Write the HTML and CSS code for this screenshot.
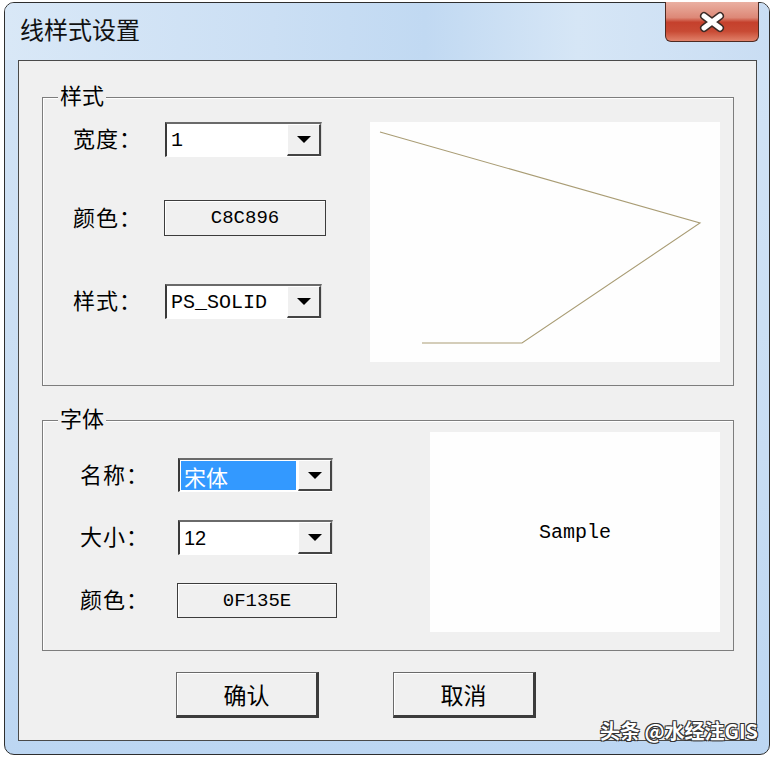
FILE: index.html
```html
<!DOCTYPE html>
<html>
<head>
    <meta charset="UTF-8">
    <title>线样式设置</title>
    <link rel="stylesheet" href="styles.css">
</head>
<body>
    <div class="window">
        <div class="titlebar">
            <div class="title">线样式设置</div>
            <button class="close-btn">
                <svg width="30" height="22" viewBox="0 0 30 22">
                    <path d="M7 5 L23 17 M23 5 L7 17" stroke="#3b2a26" stroke-width="8" stroke-linecap="round"/>
                    <path d="M7 5 L23 17 M23 5 L7 17" stroke="#ffffff" stroke-width="5" stroke-linecap="round"/>
                </svg>
            </button>
        </div>

        <div class="client">
            <div class="group group-line">
                <span class="group-title">样式</span>
                <div class="fields">
                    <div class="row row-width">
                        <span class="label">宽度：</span>
                        <div class="combo">
                            <span class="combo-text mono">1</span>
                            <span class="drop"><span class="arrow"></span></span>
                        </div>
                    </div>
                    <div class="row row-color">
                        <span class="label">颜色：</span>
                        <div class="color-box mono">C8C896</div>
                    </div>
                    <div class="row row-style">
                        <span class="label">样式：</span>
                        <div class="combo">
                            <span class="combo-text mono">PS_SOLID</span>
                            <span class="drop"><span class="arrow"></span></span>
                        </div>
                    </div>
                </div>
                <div class="preview line-preview">
                    <svg width="350" height="240" viewBox="0 0 350 240">
                        <polyline points="10,10 330,101 152,221 52,221" fill="none" stroke="#a99c74" stroke-width="1.1"/>
                    </svg>
                </div>
            </div>

            <div class="group group-font">
                <span class="group-title">字体</span>
                <div class="fields">
                    <div class="row row-name">
                        <span class="label">名称：</span>
                        <div class="combo">
                            <span class="combo-text selected">宋体</span>
                            <span class="drop"><span class="arrow"></span></span>
                        </div>
                    </div>
                    <div class="row row-size">
                        <span class="label">大小：</span>
                        <div class="combo">
                            <span class="combo-text sans">12</span>
                            <span class="drop"><span class="arrow"></span></span>
                        </div>
                    </div>
                    <div class="row row-fcolor">
                        <span class="label">颜色：</span>
                        <div class="color-box mono">0F135E</div>
                    </div>
                </div>
                <div class="preview font-preview">
                    <span class="mono sample">Sample</span>
                </div>
            </div>

            <div class="buttons">
                <button class="push">确认</button>
                <button class="push">取消</button>
            </div>
        </div>

        <div class="watermark">头条 @水经注GIS</div>
    </div>
</body>
</html>
```

FILE: styles.css
```css
body {
    margin: 0;
    background: #ffffff;
    font-family: "Noto Sans CJK SC", "Noto Sans", sans-serif;
}
.window {
    position: relative;
    margin: 2px 0 0 4px;
    width: 764px;
    height: 751px;
    border: 1px solid #2e2e2e;
    border-radius: 10px;
    background: linear-gradient(to bottom, #d3e4f6 0%, #c8ddf3 60%, #bcd6f2 100%);
    display: flex;
    flex-direction: column;
}
.titlebar {
    flex-shrink: 0;
    height: 57px;
    display: flex;
    align-items: flex-start;
    justify-content: space-between;
    background: linear-gradient(to right, #d9e8f7 0%, #cbdff4 35%, #c1d9f2 55%, #d6e6f6 75%, #c9ddf3 100%);
    border-radius: 9px 9px 0 0;
}
.title {
    padding: 11px 0 0 15px;
    font-size: 24px;
    line-height: 30px;
    color: #111;
}
.close-btn {
    margin: -1px 10px 0 0;
    width: 94px;
    height: 40px;
    border: 1px solid #4e2a22;
    border-top: none;
    border-radius: 0 0 6px 6px;
    background: linear-gradient(to bottom, #eab0a2 0%, #dd8877 40%, #c5402c 52%, #c84a34 75%, #e1826a 100%);
    display: flex;
    align-items: center;
    justify-content: center;
    padding: 0;
}
.client {
    flex-shrink: 0;
    box-sizing: border-box;
    margin: 0 12px 13px 13px;
    height: 681px;
    border: 1px solid #4a4a4a;
    background: #f0f0f0;
    padding: 36px 22px 0 23px;
}
.group {
    position: relative;
    border: 1px solid #7d7d7d;
    box-shadow: inset 1px 1px 0 #ffffff;
    display: flex;
    justify-content: space-between;
}
.group-title {
    position: absolute;
    top: -19px;
    left: 15px;
    padding: 0 2px;
    background: #f0f0f0;
    font-size: 22px;
    line-height: 30px;
    color: #000;
}
.group-line {
    height: 287px;
}
.group-font {
    margin-top: 34px;
    height: 229px;
}
.fields {
    display: flex;
    flex-direction: column;
}
.row {
    display: flex;
    align-items: center;
}
.label {
    padding-bottom: 5px;
    font-size: 22px;
    line-height: 26px;
    letter-spacing: 1px;
    color: #000;
}
.group-line .fields {
    padding: 24px 0 0 30px;
}
.group-line .label {
    width: 92px;
}
.group-line .combo {
    width: 157px;
    height: 35px;
}
.row-color {
    margin-top: 43px;
}
.row-color .color-box {
    margin-left: -1px;
    width: 162px;
    height: 36px;
}
.row-style {
    margin-top: 48px;
}
.group-font .fields {
    padding: 37px 0 0 37px;
}
.group-font .label {
    width: 98px;
}
.group-font .combo {
    width: 155px;
    height: 34px;
}
.row-size {
    margin-top: 28px;
}
.row-size .combo {
    height: 35px;
}
.row-fcolor {
    margin-top: 28px;
}
.row-fcolor .color-box {
    margin-left: -1px;
    width: 160px;
    height: 35px;
}
.combo {
    box-sizing: border-box;
    display: flex;
    background: #ffffff;
    border-top: 2px solid #6a6a6a;
    border-left: 2px solid #3a3a3a;
    border-right: 1px solid #dcdcdc;
    border-bottom: 1px solid #ffffff;
}
.combo-text {
    flex: 1;
    display: flex;
    align-items: center;
    padding-left: 4px;
    font-size: 20px;
    color: #000;
    overflow: hidden;
}
.combo-text.selected {
    margin: 1px 2px 1px 1px;
    padding-left: 3px;
    background: #3399ff;
    color: #ffffff;
    font-size: 22px;
}
.sans {
    font-family: "Liberation Sans", Arial, sans-serif;
}
.drop {
    width: 31px;
    display: flex;
    align-items: center;
    justify-content: center;
    background: #f0f0f0;
    border-top: 1px solid #ffffff;
    border-left: 1px solid #ffffff;
    border-right: 2px solid #444444;
    border-bottom: 2px solid #444444;
}
.arrow {
    width: 0;
    height: 0;
    border-left: 7px solid transparent;
    border-right: 7px solid transparent;
    border-top: 7px solid #000;
}
.color-box {
    box-sizing: border-box;
    display: flex;
    align-items: center;
    justify-content: center;
    border: 1px solid #3c3c3c;
    box-shadow: inset 1px 1px 0 #ffffff;
    background: #f0f0f0;
    font-size: 19px;
    color: #000;
}
.mono {
    font-family: "Liberation Mono", "Courier New", monospace;
}
.preview {
    background: #fefefe;
}
.line-preview {
    margin: 24px 13px 0 0;
    width: 350px;
    height: 240px;
}
.line-preview svg {
    display: block;
}
.font-preview {
    margin: 11px 13px 0 0;
    width: 290px;
    height: 200px;
    display: flex;
    align-items: center;
    justify-content: center;
}
.sample {
    font-size: 20px;
    color: #000;
}
.buttons {
    display: flex;
    gap: 74px;
    padding-left: 134px;
    margin-top: 21px;
}
.push {
    box-sizing: border-box;
    width: 143px;
    height: 46px;
    background: #f0f0f0;
    border: 1px solid #6a6a6a;
    border-right: 3px solid #3c3c3c;
    border-bottom: 3px solid #3c3c3c;
    box-shadow: inset 1px 1px 0 #ffffff;
    font-family: "Noto Sans CJK SC", sans-serif;
    font-size: 23px;
    color: #000;
    padding: 0;
}
.watermark {
    position: absolute;
    right: 11px;
    bottom: 11px;
    font-size: 20px;
    line-height: 24px;
    font-weight: bold;
    color: #ffffff;
    text-shadow: -1px -1px 0 #333, 1px -1px 0 #333, -1px 1px 0 #333, 1px 1px 0 #333;
}
```
